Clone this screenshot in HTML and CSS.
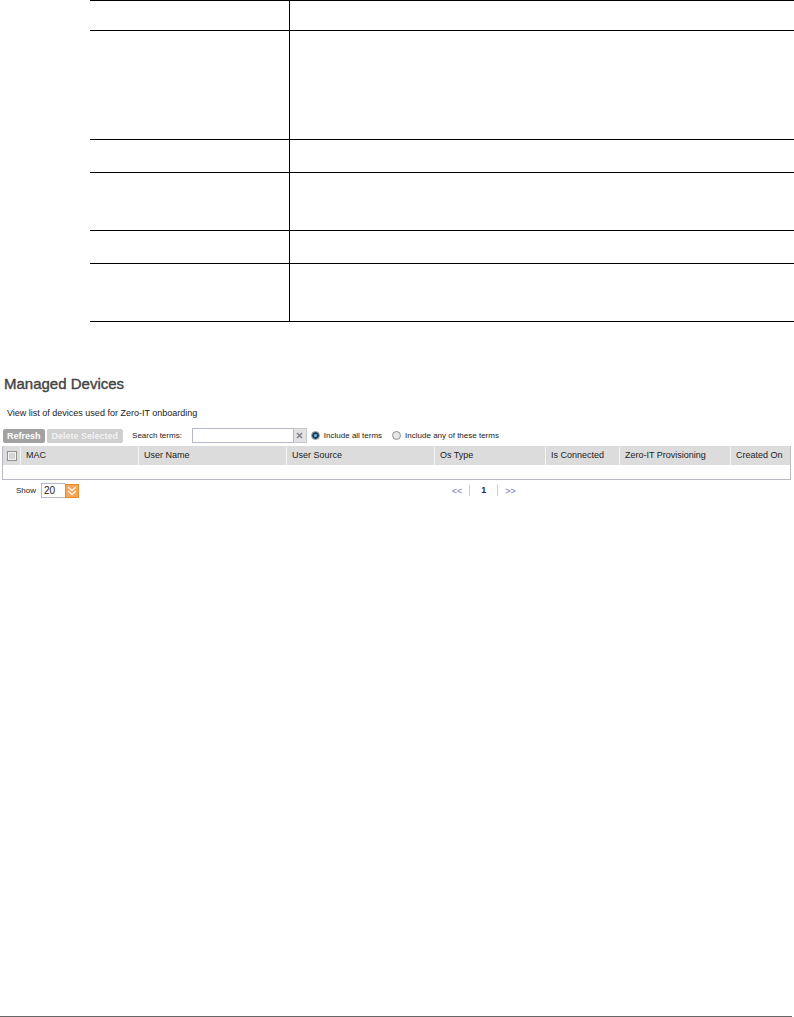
FILE: index.html
```
<!DOCTYPE html>
<html lang="en">
<head>
<meta charset="utf-8">
<title>Managed Devices</title>
<link rel="stylesheet" href="styles.css">
</head>
<body>
<div class="page">
  <div class="rules">
    <div class="rule-row row-head"></div>
    <div class="rule-row row-tall"></div>
    <div class="rule-row row-short"></div>
    <div class="rule-row row-mid"></div>
    <div class="rule-row row-short"></div>
    <div class="rule-row row-mid"></div>
  </div>
  <main class="panel">
    <h1 class="title">Managed Devices</h1>
    <p class="intro">View list of devices used for Zero-IT onboarding</p>
    <form class="toolbar">
      <button class="btn" type="button">Refresh</button>
      <button class="btn btn-off" type="button">Delete Selected</button>
      <label class="search-label" for="search">Search terms:</label>
      <input class="search" id="search" type="text">
      <button class="clear" type="button" aria-label="Clear search">
        <svg width="7" height="7" viewBox="0 0 7 7"><path d="M1 1l5 5M6 1L1 6" stroke="#858589" stroke-width="1.7"/></svg>
      </button>
      <label class="choice choice-all"><input class="radio" type="radio" name="match" checked>Include all terms</label>
      <label class="choice"><input class="radio" type="radio" name="match">Include any of these terms</label>
    </form>
    <table class="devices">
      <colgroup>
        <col class="c-check"><col class="c-mac"><col class="c-wide"><col class="c-wide"><col class="c-os"><col class="c-conn"><col class="c-os"><col>
      </colgroup>
      <thead>
        <tr>
          <th class="check-cell"><input class="check" type="checkbox" aria-label="Select all"></th>
          <th>MAC</th><th>User Name</th><th>User Source</th><th>Os Type</th><th>Is Connected</th><th>Zero-IT Provisioning</th><th>Created On</th>
        </tr>
      </thead>
      <tbody><tr><td colspan="8"></td></tr></tbody>
    </table>
    <div class="bottom">
      <div class="show">
        <label for="count">Show</label>
        <span class="combo">
          <select class="count" id="count"><option>20</option></select>
          <svg class="arrow" width="14" height="14" viewBox="0 0 14 14"><rect width="14" height="14" fill="#e98a22"/><rect x="1" y="1" width="12" height="12" fill="#f3a659"/><path d="M3 3l4 3.5L11 3M3 7l4 3.5L11 7" fill="none" stroke="#fff3df" stroke-width="1.5"/></svg>
        </span>
      </div>
      <nav class="pager">
        <a class="step" href="#">&lt;&lt;</a>
        <span class="current">1</span>
        <a class="step" href="#">&gt;&gt;</a>
      </nav>
    </div>
  </main>
  <footer class="foot"></footer>
</div>
</body>
</html>
```

FILE: styles.css
```
* { box-sizing: border-box; }
body {
  margin: 0;
  background: #fff;
  color: #222;
  font: 9px/12px "Liberation Sans", Arial, sans-serif;
}
.page { display: flex; flex-direction: column; min-height: 100vh; }

.rules { margin-left: 90px; border-bottom: 1px solid #000; }
.rule-row { border-top: 1px solid #000; }
.rule-row::before {
  content: "";
  display: block;
  box-sizing: border-box;
  width: 200px;
  height: 100%;
  border-right: 1px solid #000;
}
.row-head { height: 30px; }
.row-tall { height: 109px; }
.row-short { height: 33px; }
.row-mid { height: 58px; }

.panel { flex: 1; padding: 52px 3px 0 2px; }
.title {
  margin: 0 0 13px 2px;
  color: #444;
  font-size: 15px;
  font-weight: 400;
  line-height: 20px;
  -webkit-text-stroke: 0.4px #444;
}
.intro { margin: 0 0 9px 5px; line-height: 12px; }

.toolbar { display: flex; align-items: center; height: 15px; margin: 0 0 3px 1px; font-size: 8px; }
.btn {
  height: 14px;
  margin: 0 2px 0 0;
  padding: 0 4px;
  border: 0;
  border-radius: 2px;
  background: #a2a2a2;
  color: #fff;
  font: bold 9px/14px "Liberation Sans", Arial, sans-serif;
}
.btn-off { padding: 0 5px; background: #cfcfcf; color: #f2f2f2; }
.search-label { margin: 0 10px 0 7px; }
.search {
  width: 102px;
  height: 15px;
  padding: 0 3px;
  border: 1px solid #b5b8c8;
  background: #fff;
  font: inherit;
}
.clear {
  display: flex;
  align-items: center;
  justify-content: center;
  width: 13px;
  height: 15px;
  padding: 0;
  border: 1px solid #c9c9cd;
  border-left: 0;
  background: #e3e3e5;
}
.choice { display: flex; align-items: center; gap: 4px; }
.choice-all { margin: 0 10px 0 4px; }
.radio {
  appearance: none;
  width: 9px;
  height: 9px;
  margin: 0;
  border: 1px solid #8e8f8f;
  border-radius: 50%;
  background: #e6e6e6;
}
.radio:checked { background: radial-gradient(circle, #68bce0 0 1px, #173f5c 2px 3px, #e6e6e6 4px); }

.devices {
  width: 100%;
  table-layout: fixed;
  border-collapse: separate;
  border-spacing: 0;
  border: 1px solid #b9bac6;
  border-top-color: #dcdcdc;
}
.devices th {
  height: 18px;
  padding: 0 0 2px 5px;
  border-left: 1px solid #f5f5f5;
  background: #dcdcdc;
  font-weight: 400;
  line-height: 12px;
  text-align: left;
  vertical-align: middle;
  white-space: nowrap;
}
.devices .check-cell { padding: 0 0 0 4px; border-left: 0; }
.devices td { height: 14px; padding: 0; }
.c-check { width: 17px; }
.c-mac { width: 118px; }
.c-wide { width: 148px; }
.c-os { width: 111px; }
.c-conn { width: 74px; }
.check {
  appearance: none;
  display: block;
  width: 10px;
  height: 10px;
  margin: 0;
  border: 1px solid #8e8f8f;
  background: #d3d4d6;
  box-shadow: inset 0 0 0 1px #f4f4f4;
}

.bottom { display: grid; grid-template-columns: 57% auto; justify-content: start; margin-top: 3px; font-size: 8px; }
.show { display: flex; align-items: center; gap: 5px; padding-left: 14px; }
.combo { display: flex; align-items: center; }
.count {
  appearance: none;
  width: 24px;
  height: 15px;
  padding: 0 2px;
  border: 1px solid #b5b8c8;
  border-right: 0;
  border-radius: 0;
  background: #fff;
  color: #222;
  font: 10px/13px "Liberation Sans", Arial, sans-serif;
}
.pager { display: flex; align-items: center; font-weight: bold; }
.step { color: #9a98c4; font-size: 9px; text-decoration: none; }
.current {
  width: 29px;
  margin: 0 7px;
  border: solid #ccc;
  border-width: 0 1px;
  color: #28285c;
  font-size: 9px;
  line-height: 11px;
  text-align: center;
}
.foot { margin-right: 2px; border-top: 1px solid #666; }
```
